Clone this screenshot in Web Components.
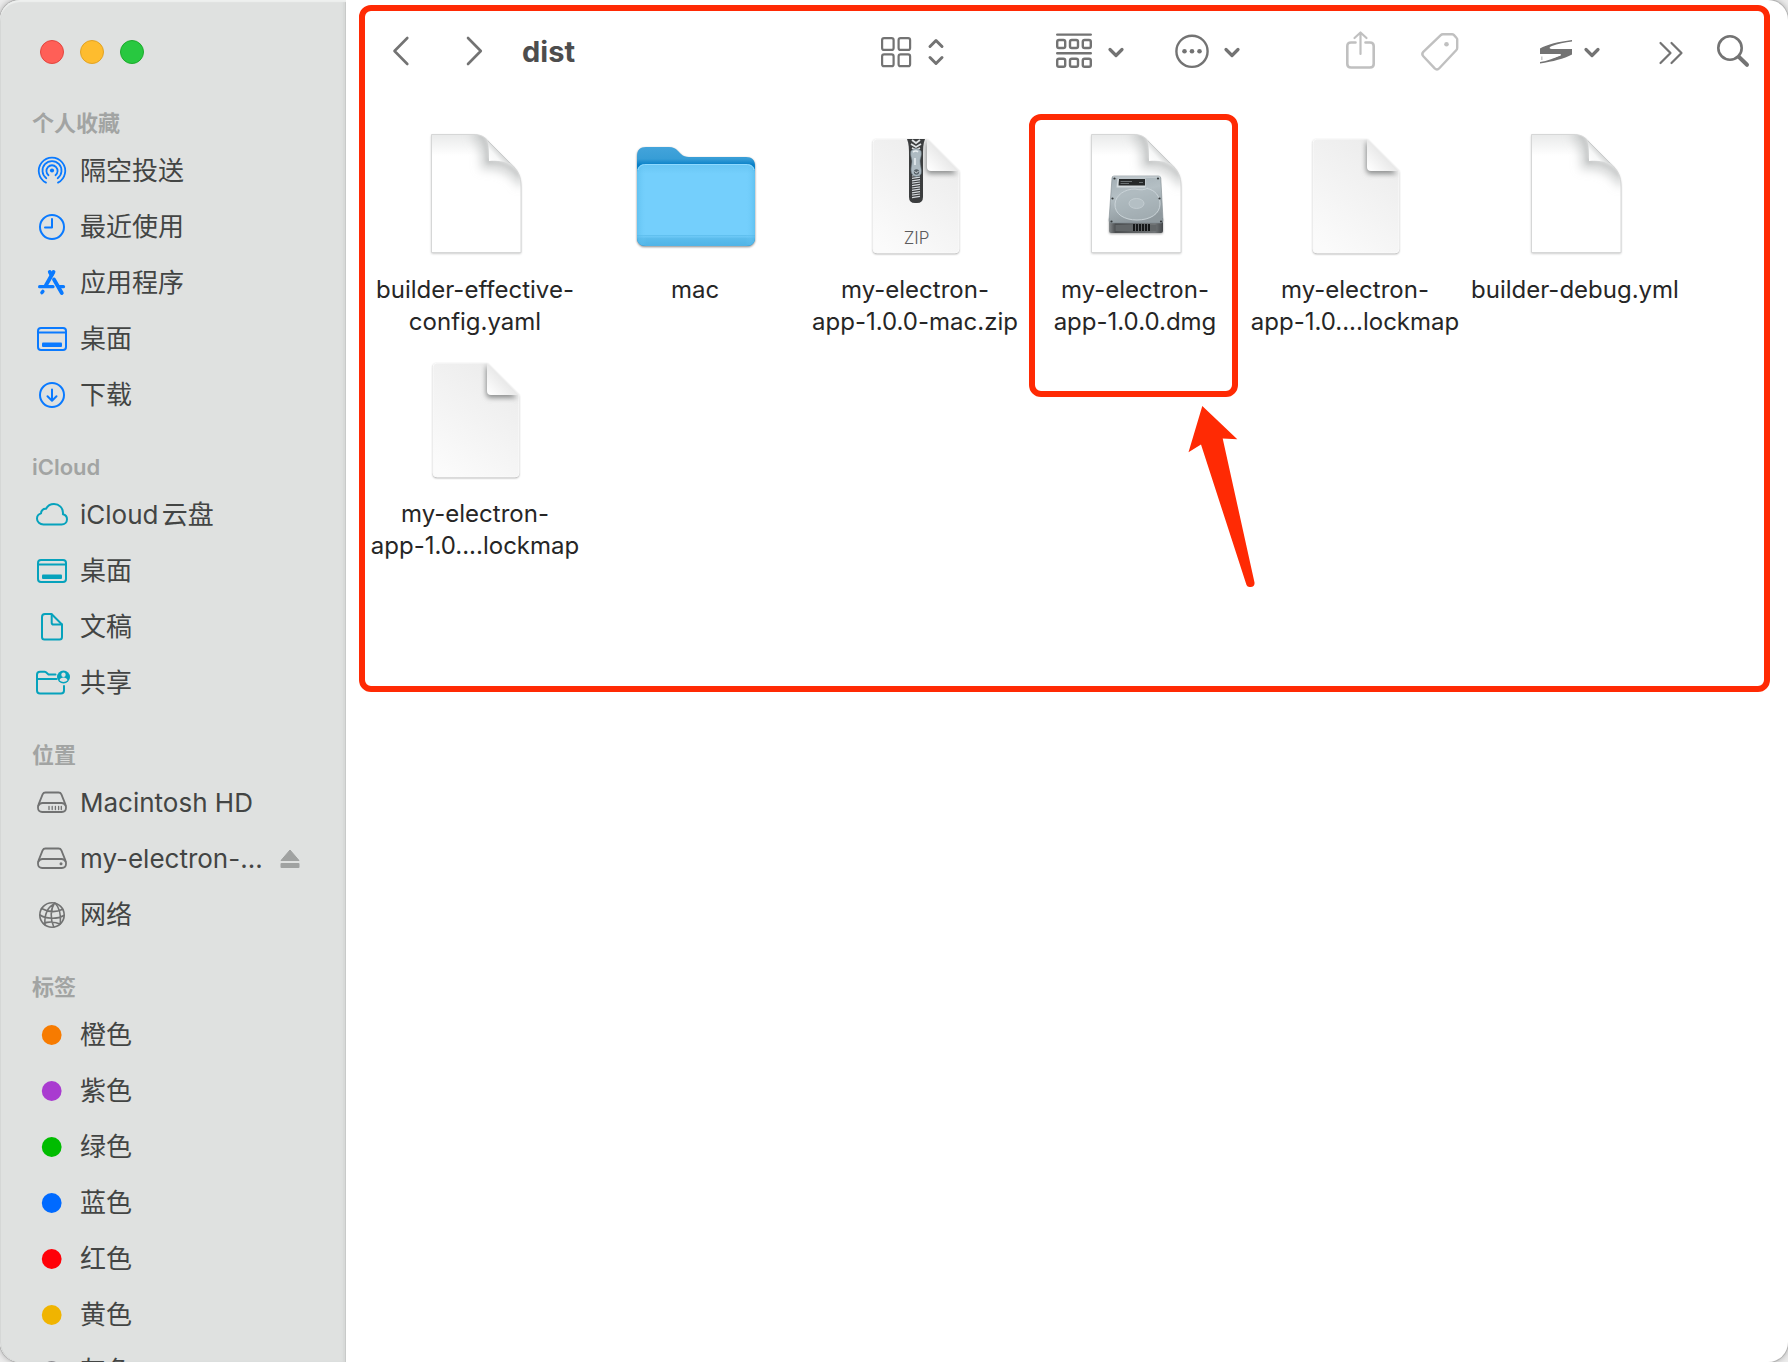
<!DOCTYPE html>
<html lang="zh-CN">
<head>
<meta charset="utf-8">
<meta name="viewport" content="width=device-width, initial-scale=1">
<title>dist</title>
<style>
  html, body { height: 100%; }
  body {
    margin: 0;
    background: #ececec;
    font-family: Inter, "Noto Sans CJK SC", sans-serif;
    color: #262626;
  }
</style>
</head>
<body>
<finder-window>
  <finder-sidebar slot="sidebar">
    <side-section heading="个人收藏" style="--tint:#0a7aff">
      <side-item icon="airdrop">隔空投送</side-item>
      <side-item icon="clock">最近使用</side-item>
      <side-item icon="apps">应用程序</side-item>
      <side-item icon="desktop">桌面</side-item>
      <side-item icon="download">下载</side-item>
    </side-section>
    <side-section heading="iCloud" style="--tint:#06a2bc">
      <side-item icon="cloud">iCloud云盘</side-item>
      <side-item icon="desktop">桌面</side-item>
      <side-item icon="document">文稿</side-item>
      <side-item icon="shared">共享</side-item>
    </side-section>
    <side-section heading="位置" style="--tint:#717272">
      <side-item icon="internal">Macintosh HD</side-item>
      <side-item icon="external" ejectable>my-electron-...</side-item>
      <side-item icon="globe">网络</side-item>
    </side-section>
    <side-section heading="标签">
      <side-item icon="dot" style="--tint:#f77b00">橙色</side-item>
      <side-item icon="dot" style="--tint:#a93bd0">紫色</side-item>
      <side-item icon="dot" style="--tint:#00bc00">绿色</side-item>
      <side-item icon="dot" style="--tint:#006aff">蓝色</side-item>
      <side-item icon="dot" style="--tint:#ff0008">红色</side-item>
      <side-item icon="dot" style="--tint:#f0b400">黄色</side-item>
      <side-item icon="dot" style="--tint:#8e8e93">灰色</side-item>
    </side-section>
  </finder-sidebar>
  <mark-frame>
    <finder-toolbar heading="dist"></finder-toolbar>
    <file-grid>
      <file-item kind="page">builder-effective-<br>config.yaml</file-item>
      <file-item kind="folder">mac</file-item>
      <file-item kind="zip">my-electron-<br>app-1.0.0-mac.zip</file-item>
      <file-item kind="dmg" marked>my-electron-<br>app-1.0.0.dmg</file-item>
      <file-item kind="plain">my-electron-<br>app-1.0....lockmap</file-item>
      <file-item kind="page">builder-debug.yml</file-item>
      <file-item kind="plain">my-electron-<br>app-1.0....lockmap</file-item>
    </file-grid>
  </mark-frame>
</finder-window>

<script>
const line = (w, body) => `<g fill="none" stroke="currentColor" stroke-width="${w}" stroke-linecap="round" stroke-linejoin="round">${body}</g>`;
const desktop = line(2, '<rect x="2" y="5" width="28" height="22" rx="3"/><path d="M2 9.500H30"/>') + '<rect x="6" y="19.500" width="20" height="4.500" rx="1" fill="currentColor"/>';
const drive = '<path d="M9.500 5.500h13c1.400 0 2.400.7 2.900 1.900l4 10c.4.900.6 1.700.6 2.600v.8c0 2.600-1.600 4.200-4.200 4.200H6.200C3.600 25 2 23.400 2 20.800V20c0-.9.200-1.700.6-2.600l4-10c.5-1.200 1.500-1.900 2.900-1.900z"/><path d="M2.600 18.500C3.400 16.500 4.700 16 6.500 16h19c1.800 0 3.100.5 3.900 2.500"/>';

/* Each glyph: width, height, markup. */
const GLYPHS = {
  airdrop: [32, 32, '<circle cx="16" cy="15.500" r="2.100" fill="currentColor"/>' + line(1.8,
    '<path d="M10 27.600A13.200 13.200 0 1 1 22 27.600"/><path d="M10.300 23.200A9.500 9.500 0 1 1 21.700 23.200"/><path d="M12.500 20.200A5.600 5.600 0 1 1 19.500 20.200"/>')],
  clock: [32, 32, line(2, '<circle cx="16" cy="16" r="12"/><path d="M16 8V16.500H9"/>')],
  apps: [32, 32, line(3.8, '<path d="M17.500 5L9.800 18.500"/><path d="M13.800 5L15.500 8"/><path d="M18 12.500L25.800 26"/>') +
    line(3.2, '<path d="M3.600 19.700H17"/><path d="M23.500 19.700H27.500"/>') + line(3.6, '<path d="M6.800 24.500L6 25.500"/>')],
  desktop: [32, 32, desktop],
  download: [32, 32, line(2, '<circle cx="16" cy="16" r="12"/><path d="M16 10.500V21.500M11.500 17.300L16 21.700L20.500 17.300"/>')],
  cloud: [32, 32, line(2, '<path d="M7.500 25.500C3.800 25.500 1 23 1 19.700C1 17 2.700 15.100 5 14.400C5 11.500 7.200 9.500 10 9.800C11.600 6.800 14.600 5 18 5C23.200 5 27 8.900 27 14C27 14.500 27 14.800 26.900 15.200C29.400 15.800 31 17.800 31 20.200C31 23.200 28.600 25.500 25.500 25.500Z"/>')],
  document: [32, 32, line(2, '<path d="M9 3H15.500L26 13.500V26C26 27.700 25.200 28.500 23.500 28.500H8.500C6.800 28.500 6 27.700 6 26V6C6 4 7 3 9 3Z"/><path d="M15.700 3.500V11.800C15.700 13 16.300 13.600 17.500 13.600H26"/>')],
  shared: [34, 32, line(2, '<path d="M19.500 7.500H12.500L10 5.300C9.600 5 9.200 4.800 8.500 4.800H4C2 4.800 1 5.800 1 7.800V23.500C1 25.500 2 26.500 4 26.500H25C27 26.500 28 25.500 28 23.500V19"/><path d="M1 12H20.500"/>') +
    '<circle cx="27.500" cy="10" r="6.500" fill="currentColor"/><circle cx="27.500" cy="7.800" r="2.200" fill="#dfe1e0"/><path d="M23.500 13.300c.5-1.900 2.100-2.700 4-2.700s3.500.8 4 2.700c-1.200 1.200-2.500 1.700-4 1.700s-2.800-.5-4-1.700z" fill="#dfe1e0"/>'],
  internal: [32, 32, line(1.8, drive + '<path d="M13 19.500V22.500M16.200 19.500V22.500M19.400 19.500V22.500M22.600 19.500V22.500M25.300 19.500V22.500" stroke-width="1.300"/>')],
  external: [32, 32, line(1.8, drive) + '<circle cx="25" cy="20.700" r="1.500" fill="currentColor"/>'],
  globe: [32, 32, line(1.6, '<circle cx="16" cy="16" r="12.200"/><path d="M19.500 4.500C12 7 8 15 9 25.800M18.500 4C14.500 10 14 20 17.800 28M19 4C23 8 25.300 14 24.300 24.800M5.500 9.500C12 13 20 13.500 26.800 10.300M4 16C10 20 21 20.500 28 16.500M7.500 24.500C12 22.500 19 22.800 24 25"/>')],
  dot: [32, 32, '<circle cx="15.700" cy="16" r="9.900" fill="currentColor"/>'],
  eject: [20, 20, '<path d="M10 1L19 11.500H1Z" fill="currentColor" stroke="currentColor" stroke-linejoin="round"/><rect x="0.500" y="14" width="19" height="5" rx="1" fill="currentColor"/>'],
  back: [18, 40, line(2.6, '<path d="M15.300 6L2.500 19L15.300 32"/>')],
  forward: [18, 40, line(2.6, '<path d="M2 6L14.800 19L2 32"/>')],
  grid: [30, 40, line(2.200, '<rect x="1.100" y="6.100" width="11.500" height="11.800" rx="2"/><rect x="17.600" y="6.100" width="11.500" height="11.800" rx="2"/><rect x="1.100" y="22.400" width="11.500" height="11.800" rx="2"/><rect x="17.600" y="22.400" width="11.500" height="11.800" rx="2"/>')],
  updown: [16, 40, line(3, '<path d="M2 14.500L8 8.500L14 14.500M2 25.500L8 31.500L14 25.500"/>')],
  group: [36, 40, line(2.400, '<path d="M1.200 2.600H34.800M1.200 21.300H34.800"/>' + [8, 26.700].map(y => [1.200, 14, 26.800].map(x => `<rect x="${x}" y="${y}" width="8" height="8" rx="1.800"/>`).join('')).join(''))],
  chevron: [16, 40, line(3.200, '<path d="M2 17.500L8 23.500L14 17.500"/>')],
  more: [34, 40, line(2.400, '<circle cx="17" cy="19.300" r="15.600"/>') + '<g fill="currentColor"><circle cx="9.500" cy="19.300" r="2.300"/><circle cx="17" cy="19.300" r="2.300"/><circle cx="24.500" cy="19.300" r="2.300"/></g>'],
  share: [30, 40, line(2.600, '<path d="M9.500 10.500H5C2.500 10.500 1.300 11.700 1.300 14V32C1.300 34.300 2.500 35.500 5 35.500H24C26.500 35.500 27.700 34.300 27.700 32V14C27.700 11.700 26.500 10.500 24 10.500H19.500"/><path d="M14.500 22V1M8.500 6L14.500 0.500L20.500 6" stroke-width="2.200"/>')],
  tag: [38, 40, line(2.400, '<path d="M22 2.200H31C31.800 2.200 32.300 2.400 32.800 2.900L35.600 6C36 6.400 36.200 7 36.200 7.600V16C36.200 16.800 36 17.400 35.400 18L18.300 36.300C16.800 37.900 15.200 37.900 13.700 36.400L2.300 24.200C1 22.800 1 21.300 2.300 19.900L19.500 3.300C20.200 2.600 21 2.200 22 2.200Z"/>') + '<circle cx="25.500" cy="12.300" r="2.300" fill="currentColor"/>'],
  swish: [32, 40, '<g fill="currentColor"><path d="M32 8C19 9.500 7 12.500 0 16.500V22H19C21.500 22 22 23.200 19.500 24C14 26 7 27 0 28V31.500C13 29.500 24 26.800 32 22.500V17H13C9 17 8.500 15.500 12 14C17.500 11.800 25 10.300 32 9.500Z"/></g><path d="M0 22.500C8 22.300 15 22 21 22.700C15 26.500 7 28.800 0 30Z" fill="#fff"/><path d="M1.800 24.500V28" stroke="#c8c8c8" stroke-width="1.500"/>'],
  overflow: [24, 40, line(2.200, '<path d="M1.500 11L11.500 21L1.500 31M12.500 11L22.500 21L12.500 31"/>')],
  search: [32, 40, line(2.600, '<circle cx="13" cy="16" r="11.700"/>') + line(4, '<path d="M22 25L30 32.800"/>')]
};

class FinderGlyph extends HTMLElement {
  connectedCallback() {
    const [w, h, body] = GLYPHS[this.getAttribute('name')];
    this.attachShadow({ mode: 'open' }).innerHTML =
      `<style>:host{display:block;flex:none}svg{display:block;overflow:visible}</style>
       <svg width="${w}" height="${h}" viewBox="0 0 ${w} ${h}" aria-hidden="true">${body}</svg>`;
  }
}

class FinderWindow extends HTMLElement {
  connectedCallback() {
    this.attachShadow({ mode: 'open' }).innerHTML = `
      <style>
        :host { display: flex; height: 100vh; overflow: hidden; background: #fff; border-radius: 20px; box-shadow: 0 0 0 1px #b4b4b4, 0 0 6px #999; }
        main { flex: 1; min-width: 0; padding: 5px 18px 0 13px; }
      </style>
      <slot name="sidebar"></slot>
      <main><slot></slot></main>`;
  }
}

class FinderSidebar extends HTMLElement {
  connectedCallback() {
    this.attachShadow({ mode: 'open' }).innerHTML = `
      <style>
        :host { display: block; flex: none; width: 346px; box-sizing: border-box; overflow: hidden; background: #dfe1e0;
          border-radius: 20px 0 0 20px; box-shadow: inset 0 2px 1px #eef0ef, inset 1px 0 0 #d2d4d3, inset -1px 0 0 #c4c6c5, inset -3px 0 2px #d6d8d7; }
        .lights { display: flex; gap: 16px; padding: 40px 40px 15px; }
        button { width: 24px; height: 24px; padding: 0; border: 1px solid; border-radius: 50%; }
        .close { background: #ff5f57; border-color: #e2463f; }
        .min { background: #febc2e; border-color: #e1a325; }
        .max { background: #28c840; border-color: #1dab2c; }
      </style>
      <div class="lights">
        <button class="close" aria-label="关闭"></button>
        <button class="min" aria-label="最小化"></button>
        <button class="max" aria-label="缩放"></button>
      </div>
      <nav><slot></slot></nav>`;
  }
}

class SideSection extends HTMLElement {
  connectedCallback() {
    this.attachShadow({ mode: 'open' }).innerHTML = `
      <style>
        :host { display: block; }
        h2 { margin: 0; padding: 28px 32px 4px; font-size: 22px; line-height: 32px; font-weight: 600; color: #a2a4a3; }
      </style>
      <h2>${this.getAttribute('heading')}</h2><slot></slot>`;
  }
}

class SideItem extends HTMLElement {
  connectedCallback() {
    const eject = this.hasAttribute('ejectable')
      ? '<button aria-label="推出"><finder-glyph name="eject"></finder-glyph></button>' : '';
    this.attachShadow({ mode: 'open' }).innerHTML = `
      <style>
        :host { display: flex; align-items: center; height: 56px; padding: 0 46px 0 36px; }
        a { flex: 1; display: flex; align-items: center; gap: 12px; color: #434544; text-decoration: none; min-width: 0; }
        .icon { width: 32px; flex: none; color: var(--tint); }
        .text { font-size: 26px; line-height: 36px; white-space: nowrap; text-autospace: normal; }
        button { flex: none; padding: 0; border: 0; background: none; color: #a0a2a1; }
      </style>
      <a href="#"><finder-glyph class="icon" name="${this.getAttribute('icon')}"></finder-glyph><span class="text"><slot></slot></span></a>${eject}`;
  }
}

class MarkFrame extends HTMLElement {
  connectedCallback() {
    this.attachShadow({ mode: 'open' }).innerHTML = `
      <style>:host { display: block; border: 6px solid #ff2a04; border-radius: 12px; padding-bottom: 124px; }</style>
      <slot></slot>`;
  }
}

class FinderToolbar extends HTMLElement {
  connectedCallback() {
    const g = n => `<finder-glyph name="${n}"></finder-glyph>`;
    this.attachShadow({ mode: 'open' }).innerHTML = `
      <style>
        :host { display: flex; align-items: center; height: 82px; padding: 0 15px 0 27px; color: #737373; }
        button { display: flex; align-items: center; flex: none; padding: 0; border: 0; background: none; color: inherit; }
        button:disabled { color: #c0c0c0; }
        h1 { flex: 1; margin: 0; font-size: 29px; line-height: 40px; font-weight: 700; color: #4d4d4d; }
        .nav { display: flex; gap: 56px; margin-right: 38px; }
        .view { gap: 17px; margin-right: 112px; }
        .group { gap: 16px; margin-right: 51px; }
        .more { gap: 15px; margin-right: 106px; }
        .share { margin-right: 45px; }
        .tag { margin-right: 81px; }
        .swish { gap: 12px; margin-right: 59px; }
        .overflow { margin-right: 34px; }
      </style>
      <div class="nav"><button aria-label="后退">${g('back')}</button><button aria-label="前进">${g('forward')}</button></div>
      <h1>${this.getAttribute('heading')}</h1>
      <button class="view" aria-label="显示方式">${g('grid')}${g('updown')}</button>
      <button class="group" aria-label="分组">${g('group')}${g('chevron')}</button>
      <button class="more" aria-label="操作">${g('more')}${g('chevron')}</button>
      <button class="share" aria-label="共享" disabled>${g('share')}</button>
      <button class="tag" aria-label="标签" disabled>${g('tag')}</button>
      <button class="swish" aria-label="扩展">${g('swish')}${g('chevron')}</button>
      <button class="overflow" aria-label="更多">${g('overflow')}</button>
      <button aria-label="搜索">${g('search')}</button>`;
  }
}

class FileGrid extends HTMLElement {
  connectedCallback() {
    this.attachShadow({ mode: 'open' }).innerHTML = `
      <style>:host { display: grid; grid-template-columns: repeat(auto-fill, 220px); row-gap: 16px; padding-top: 37px; }</style>
      <slot></slot>`;
  }
}

const pageEdge = 'M20.500 4.500H62C70 4.500 74 7 78 12L99 33C107 40 110 46 110 57V122.500H20.500Z';
const pageArt = `
  <defs>
    <linearGradient id="curl" gradientUnits="userSpaceOnUse" x1="78" y1="31" x2="89" y2="21"><stop offset="0" stop-color="#fff"/><stop offset="0.550" stop-color="#f6f7f7"/><stop offset="1" stop-color="#cfd1d1"/></linearGradient>
    <linearGradient id="top" x2="0" y2="1"><stop offset="0" stop-color="#e9eaea"/><stop offset="0.180" stop-color="#fff"/></linearGradient>
    <filter id="soft" x="-50%" y="-50%" width="200%" height="200%"><feGaussianBlur stdDeviation="5"/></filter>
    <filter id="near" x="-50%" y="-50%" width="200%" height="200%"><feGaussianBlur stdDeviation="2"/></filter>
    <clipPath id="sheet"><path d="${pageEdge}"/></clipPath>
  </defs>
  <path d="${pageEdge}" fill="url(#top)" filter="drop-shadow(0 1px 1px #0004)"/>
  <g clip-path="url(#sheet)">
    <path d="M62 3C70 6 75 14 75 34C90 34 104 40 112 54" fill="none" stroke="#bfc2c2" stroke-opacity="0.650" stroke-width="11" filter="url(#soft)"/>
    <path d="M68 4C75 8 76.500 18 77 32C90 31 100 35 109 46" fill="none" stroke="#aeb1b1" stroke-opacity="0.700" stroke-width="3" filter="url(#near)"/>
  </g>
  <path d="${pageEdge}" fill="none" stroke="#d6d7d7"/>
  <path d="M76 10C78 15 78 22 78 31C86 30 93 31 100 34Z" fill="url(#curl)"/>
  <path d="M77 11L99 33" stroke="#c9cbcb" fill="none"/>`;
const plainEdge = 'M26 9H76L108 41V119a4 4 0 0 1-4 4H26a4 4 0 0 1-4-4V13a4 4 0 0 1 4-4Z';
const plainArt = `
  <defs>
    <linearGradient id="body" x1="0.700" y1="0.100" x2="0.200" y2="1"><stop offset="0" stop-color="#ededed"/><stop offset="1" stop-color="#fbfbfb"/></linearGradient>
    <linearGradient id="fold" gradientUnits="userSpaceOnUse" x1="77" y1="40" x2="93" y2="25"><stop offset="0" stop-color="#fff"/><stop offset="1" stop-color="#e8e8e8"/></linearGradient>
    <filter id="cast" x="-50%" y="-50%" width="200%" height="200%"><feGaussianBlur stdDeviation="2.500"/></filter>
    <clipPath id="clip"><path d="${plainEdge}"/></clipPath>
  </defs>
  <path d="${plainEdge}" fill="url(#body)" filter="drop-shadow(0 1.500px 1px #0006)"/>
  <path d="${plainEdge}" fill="none" stroke="#fafafa"/>
  <g clip-path="url(#clip)"><path d="M76 13V38q0 5 4 5H104L76 13Z" fill="#8e9090" stroke="#8e9090" stroke-width="2" filter="url(#cast)"/></g>
  <path d="M76 9V37q0 4 4 4H108Z" fill="url(#fold)"/>`;
const teeth = Array.from({ length: 10 }, (_, i) => `<path d="M61 ${46 + i * 2.4}l8-1.200" stroke="#d5dadd" stroke-width="1.200"/>`).join('');
const ART = {
  page: pageArt,
  plain: plainArt,
  folder: `
    <defs>
      <linearGradient id="back" x2="0" y2="1"><stop offset="0" stop-color="#43a4db"/><stop offset="0.120" stop-color="#379dd6"/><stop offset="0.180" stop-color="#0880c8"/></linearGradient>
      <linearGradient id="front" x2="0" y2="1"><stop offset="0" stop-color="#68c5f3"/><stop offset="0.120" stop-color="#74cffc"/><stop offset="0.860" stop-color="#74cffc"/><stop offset="0.870" stop-color="#5fbfee"/><stop offset="0.885" stop-color="#6cc8f6"/><stop offset="0.910" stop-color="#5bbcec"/><stop offset="1" stop-color="#51b4e6"/></linearGradient>
      <linearGradient id="side"><stop offset="0" stop-color="#4eb4e6" stop-opacity="0.500"/><stop offset="0.080" stop-color="#74cffc" stop-opacity="0"/><stop offset="0.920" stop-color="#74cffc" stop-opacity="0"/><stop offset="1" stop-color="#4eb4e6" stop-opacity="0.500"/></linearGradient>
    </defs>
    <g filter="drop-shadow(0 1px 1px #0007)">
      <path d="M6 26C6 20 9 17 15 17H38C42 17 44 18 47 21L50 24C52.500 26.300 54.500 27 58 27H115C121 27 124 30 124 36V107C124 113 121 116 115 116H15C9 116 6 113 6 107Z" fill="url(#back)"/>
      <path d="M6 43C6 37 9 34 15 34H115C121 34 124 37 124 43V107C124 113 121 116 115 116H15C9 116 6 113 6 107Z" fill="url(#front)"/>
    </g>
    <path d="M6 43C6 37 9 34 15 34H115C121 34 124 37 124 43V107C124 113 121 116 115 116H15C9 116 6 113 6 107Z" fill="url(#side)"/>
    <path d="M7 40C8 36 11 34.500 15 34.500H115C119 34.500 122 36 123 40" fill="none" stroke="#8ed9ff"/>`,
  zip: plainArt + `
    <path d="M56 9H74C72 14 72 19 72 26V67q0 6-6 6h-2q-6 0-6-6V26C58 19 58 14 56 9Z" fill="#3b3d3e"/>
    <path d="M61 10l4 3 4-3M60 14l5 3 5-3M61 18l4 2 4-2" fill="none" stroke="#dfe3e5" stroke-width="1.800"/>
    ${teeth}
    <path d="M60 21q5-5 10 0c1 5-1 7-1 10 0 5 2 8 1 13q-5 5-9 0c-2-5 0-8 0-13 0-3-2-5-1-10Z" fill="#aebbc2" stroke="#798890" stroke-width="0.600"/>
    <path d="M62 22q3-2 5 0M64 28v7" stroke="#e7edf0" stroke-width="1.600" fill="none"/>
    <circle cx="65.500" cy="42" r="2.700" fill="#596369"/><path d="M63.500 41.500l2 1.500 2-2" stroke="#dce3e6" fill="none"/>
    <text x="65.500" y="114" text-anchor="middle" font-size="17" font-weight="300" fill="#5c5c5c">ZIP</text>`,
  dmg: pageArt + `
    <defs>
      <linearGradient id="plate" x2="0.300" y2="1"><stop offset="0" stop-color="#a3aeb4"/><stop offset="0.450" stop-color="#b4bfc4"/><stop offset="1" stop-color="#8f999e"/></linearGradient>
      <linearGradient id="base"><stop offset="0" stop-color="#85898b"/><stop offset="0.120" stop-color="#4b4e50"/><stop offset="0.850" stop-color="#717577"/><stop offset="1" stop-color="#44474a"/></linearGradient>
    </defs>
    <path d="M38 88H92V101q0 2-2 2H40q-2 0-2-2Z" fill="url(#base)" filter="drop-shadow(0 1px 1px #0005)"/>
    <path d="M44.500 95H85.500V101H44.500Z" fill="#626668"/>
    <path d="M63 94V101M66 94V101M69 94V101M72 94V101M75 94V101M78 94V101" stroke="#151718" stroke-width="2"/>
    <path d="M43 46H87.500q2 0 2.300 2L92 90q0 3-2 3H40q-2 0-2-3L41 48q.2-2 2-2Z" fill="url(#plate)" stroke="#7e888d" stroke-width="0.600"/>
    <path d="M42 47H89" stroke="#d5dbde"/>
    <path d="M46.500 48.500H74.500V57.500H45.500Z" fill="#d3dadd"/><path d="M48 49H74V55.500H47.500Z" fill="#26292a"/>
    <path d="M49.500 51.500H61M49.500 53.500H58M68 52.500H72" stroke="#7d8487" stroke-width="0.800"/>
    <path d="M76 58.500C84 60 89 66 89 74C89 84 79 90 66 90C53 90 43.500 84 44 74C44.500 65 54 59 64 59Q72 61 77 58" fill="#aeb9be" fill-opacity="0.600" stroke="#ced7db" stroke-width="0.900"/>
    <ellipse cx="65.500" cy="73.500" rx="7.500" ry="5" fill="#b4bfc4" stroke="#cbd4d8" stroke-width="0.700"/>
    <g fill="#34383a"><circle cx="43.500" cy="48.500" r="1.100"/><circle cx="87" cy="48.500" r="1.100"/><circle cx="41.500" cy="68.500" r="1.100"/><circle cx="88.500" cy="68.500" r="1.100"/><circle cx="40.500" cy="91.500" r="1.100"/><circle cx="90" cy="91.500" r="1.100"/></g>`
};

class FileItem extends HTMLElement {
  connectedCallback() {
    const mark = this.hasAttribute('marked')
      ? `<div class="ring"></div>
         <svg class="arrow" width="50" height="184" viewBox="0 0 50 184" aria-hidden="true"><path d="M14.300 0L49.300 33.300L34.700 32.500L66.500 176.500Q67 181 62.500 181Q59.500 181.500 58.500 179L13 38.500L0.500 46.300Z" fill="#ff2a04"/></svg>` : '';
    this.attachShadow({ mode: 'open' }).innerHTML = `
      <style>
        :host { display: block; position: relative; height: 208px; }
        a { display: flex; flex-direction: column; align-items: center; gap: 16px; color: #262626; text-decoration: none; }
        .art { display: block; overflow: visible; }
        .label { font-size: 24px; line-height: 32px; text-align: center; white-space: nowrap; }
        .ring { position: absolute; inset: -16px 7px auto 4px; height: 271px; border: 6px solid #ff2a04; border-radius: 12px; }
        .arrow { position: absolute; left: 163px; top: 276px; overflow: visible; }
      </style>
      <a href="#"><svg class="art" width="128" height="128" viewBox="0 0 128 128" aria-hidden="true">${ART[this.getAttribute('kind')]}</svg>
      <span class="label"><slot></slot></span></a>${mark}`;
  }
}

customElements.define('finder-glyph', FinderGlyph);
customElements.define('finder-window', FinderWindow);
customElements.define('finder-sidebar', FinderSidebar);
customElements.define('side-section', SideSection);
customElements.define('side-item', SideItem);
customElements.define('mark-frame', MarkFrame);
customElements.define('finder-toolbar', FinderToolbar);
customElements.define('file-grid', FileGrid);
customElements.define('file-item', FileItem);
</script>
</body>
</html>
